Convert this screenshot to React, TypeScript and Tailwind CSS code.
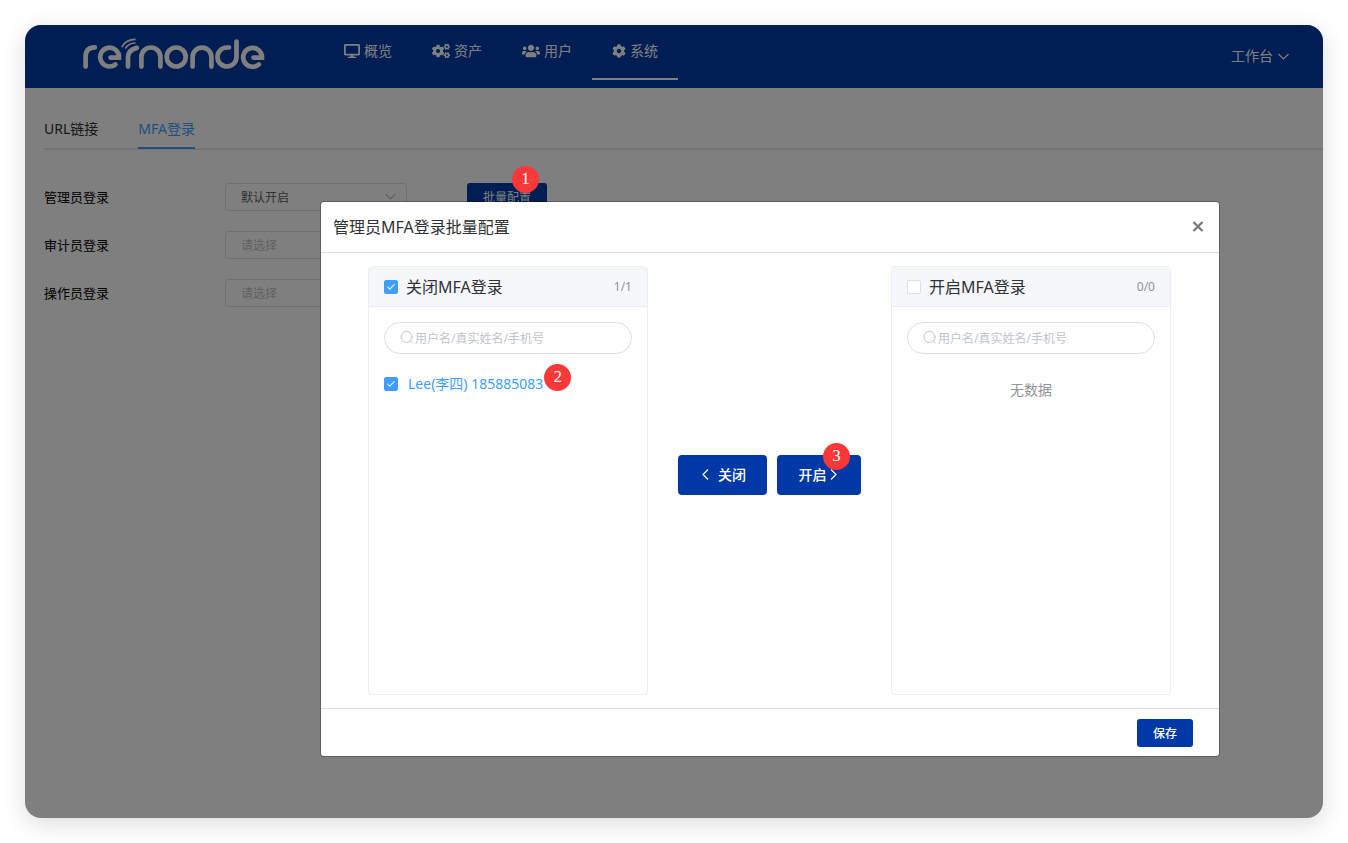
import React, { useState } from 'react';
import { FaCog, FaCogs, FaDesktop, FaUsers } from 'react-icons/fa';
import { Check } from 'lucide-react';

const NAV_ITEMS = [
  { label: '概览', icon: <FaDesktop size={16} />, active: false },
  { label: '资产', icon: <FaCogs size={18} />, active: false },
  { label: '用户', icon: <FaUsers size={18} />, active: false },
  { label: '系统', icon: <FaCog size={14} />, active: true },
];

const LOGIN_ROWS = [
  { id: 'admin', label: '管理员登录', value: 'on' },
  { id: 'auditor', label: '审计员登录', value: '' },
  { id: 'operator', label: '操作员登录', value: '' },
];

const ARROWS = {
  down: 'M1.5 4l5 5 5-5',
  left: 'M9 1.5l-5 5 5 5',
  right: 'M4 1.5l5 5-5 5',
};

const Arrow: React.FC<{ to: keyof typeof ARROWS; className?: string }> = ({ to, className = '' }) => (
  <svg width="13" height="13" viewBox="0 0 13 13" fill="none" stroke="currentColor" strokeWidth="1.2" className={`shrink-0 ${className}`}>
    <path d={ARROWS[to]} />
  </svg>
);

const Logo: React.FC = () => (
  <svg width="184" height="34" viewBox="82 37 184 34" fill="none" stroke="currentColor" strokeWidth="4.7" strokeLinecap="round" role="img" aria-label="remonde">
    <path d="M85.6 66.6V57q0-9.6 9.2-9.6" />
    <path d="M110.5 57.6h8.5A9.4 9.4 0 1 0 115.5 64.4" />
    <path d="M128 66.6V57.5q0-7.5 8.8-9.6" />
    <path d="M141.4 66.6V57a9.5 9.5 0 0 1 19 0v9.6" />
    <circle cx="176.2" cy="57" r="9.5" />
    <path d="M192.6 66.6V57a9.4 9.4 0 0 1 18.8 0v9.6" />
    <path d="M229 47.5h-2.2a9.5 9.5 0 1 0 9.7 9.5V41.6" />
    <path d="M253.5 57.6h8.5A9.4 9.4 0 1 0 258.8 64.4" />
    <path d="M122.2 46.6q3.8-7 12.8-7.2" strokeWidth="1.6" />
    <path d="M125.6 48q3-4.8 9.4-5" strokeWidth="1.6" />
  </svg>
);

const StepBadge: React.FC<{ step: number; className: string }> = ({ step, className }) => (
  <span className={`absolute z-20 w-[27px] h-[27px] rounded-full bg-[#fb3838] text-white text-[17px] font-normal flex items-center justify-center font-['Liberation_Serif',serif] ${className}`}>
    {step}
  </span>
);

interface TickBoxProps {
  id: string;
  checked: boolean;
  onChange: (checked: boolean) => void;
}

const TickBox: React.FC<TickBoxProps> = ({ id, checked, onChange }) => (
  <span className="relative flex w-[14px] h-[14px] shrink-0">
    <input
      id={id}
      type="checkbox"
      className="appearance-none w-full h-full rounded-xs border border-[#dcdfe6] bg-white checked:bg-[#409eff] checked:border-[#409eff]"
      checked={checked}
      onChange={e => onChange(e.target.checked)}
    />
    {checked && <Check size={10} strokeWidth={2.5} className="absolute inset-0 m-auto text-white pointer-events-none" />}
  </span>
);

interface TransferPanelProps {
  id: string;
  title: string;
  count: string;
  checked: boolean;
  onCheck: (checked: boolean) => void;
  children: React.ReactNode;
}

const TransferPanel: React.FC<TransferPanelProps> = ({ id, title, count, checked, onCheck, children }) => (
  <section className="w-[280px] h-[429px] border border-[#ebeef5] rounded overflow-hidden">
    <div className="h-10 px-[15px] flex items-center bg-[#f5f7fa] border-b border-[#ebeef5]">
      <TickBox id={id} checked={checked} onChange={onCheck} />
      <label htmlFor={id} className="ml-2 text-base text-[#303133]">{title}</label>
      <span className="ml-auto text-xs text-[#909399]">{count}</span>
    </div>
    <div className="p-[15px]">
      <label className="h-8 px-[15px] flex items-center border border-[#dcdfe6] rounded-full">
        <svg width="14" height="14" viewBox="0 0 14 14" fill="none" stroke="#c0c4cc" strokeLinecap="round" className="shrink-0">
          <circle cx="6.5" cy="6" r="5.5" />
          <path d="M10.5 10l2 2" />
        </svg>
        <input
          type="text"
          aria-label={`${title}搜索`}
          className="ml-px pt-0.5 w-full min-w-0 text-xs outline-none placeholder:text-[#c0c4cc]"
          placeholder="用户名/真实姓名/手机号"
        />
      </label>
      {children}
    </div>
  </section>
);

export default function App() {
  const [sourceChecked, setSourceChecked] = useState(true);
  const [targetChecked, setTargetChecked] = useState(false);

  return (
    <div className="min-h-screen bg-white p-[25px] flex flex-col font-['Noto_Sans','Noto_Sans_CJK_SC',sans-serif] text-sm">
      <div className="relative grow min-h-[793px] rounded-2xl overflow-hidden bg-white shadow-[0_6px_24px_rgba(0,0,0,0.14)]">
        <header className="h-[63px] pl-[57px] pr-[33px] flex items-start bg-[#003aa8] text-white">
          <div className="pt-3"><Logo /></div>
          <nav className="flex ml-[58px] text-sm">
            {NAV_ITEMS.map(item => (
              <a
                key={item.label}
                href="#"
                className={`h-[55px] pb-0.5 flex items-center gap-1 border-b-2 px-5 ${item.active ? 'border-white' : 'border-transparent'}`}
              >
                {item.icon}
                {item.label}
              </a>
            ))}
          </nav>
          <button className="ml-auto h-[62px] flex items-center gap-1">
            工作台 <Arrow to="down" />
          </button>
        </header>

        <main className="pl-[19px]">
          <nav className="pt-5 flex gap-10 border-b-2 border-[#e4e7ed] text-[#303133]">
            <a href="#" className="h-10 leading-[42px]">URL链接</a>
            <a href="#" className="h-[41px] -mb-0.5 leading-[42px] border-b-2 border-[#409eff] text-[#409eff]">MFA登录</a>
          </nav>
          <div className="pt-[33px] flex flex-col gap-5">
            {LOGIN_ROWS.map(row => (
              <div key={row.id} className="flex items-center h-7">
                <label htmlFor={row.id} className="w-[181px] text-[13px] text-black">{row.label}</label>
                <div className="relative w-[182px]">
                  <select
                    id={row.id}
                    defaultValue={row.value}
                    className={`appearance-none w-full h-7 pt-0.5 pl-[15px] border border-[#dcdfe6] rounded text-xs ${row.value ? 'text-[#606266]' : 'text-[#c0c4cc]'}`}
                  >
                    <option value="">请选择</option>
                    <option value="on">默认开启</option>
                  </select>
                  <Arrow to="down" className="absolute right-[10px] top-[7px] text-[#c0c4cc] pointer-events-none" />
                </div>
                {row.id === 'admin' && (
                  <button className="relative ml-[60px] w-20 h-7 pt-0.5 rounded-[3px] bg-[#003aa8] text-white text-xs">
                    批量配置
                    <StepBadge step={1} className="left-[45px] -top-[17px]" />
                  </button>
                )}
              </div>
            ))}
          </div>
        </main>

        <div className="absolute inset-0 z-10 bg-black/50 flex items-start justify-end pt-[177px] pr-[104px]">
          <div role="dialog" aria-labelledby="dialog-title" className="relative z-30 w-[898px] bg-white rounded-[3px] shadow-[0_0_0_1px_rgba(0,0,0,0.25)]">
            <div className="h-[51px] px-3 flex items-center justify-between border-b border-[#dcdfe6]">
              <h2 id="dialog-title" className="text-base text-[#303133]">管理员MFA登录批量配置</h2>
              <button aria-label="关闭" className="w-[18px] h-[18px] flex items-center justify-center text-[#777]">
                <svg width="12" height="12" viewBox="0 0 12 12" fill="none" stroke="currentColor" strokeWidth="2.2">
                  <path d="M1.5 1l9 9M10.5 1l-9 9" />
                </svg>
              </button>
            </div>

            <div className="py-[13px] pl-[47px] pr-12 flex items-center justify-between">
              <TransferPanel id="source-all" title="关闭MFA登录" count="1/1" checked={sourceChecked} onCheck={setSourceChecked}>
                <div className="mt-[15px] h-[30px] flex items-center text-[#409eff]">
                  <TickBox id="user-lee" checked={sourceChecked} onChange={setSourceChecked} />
                  <span className="relative ml-[10px]">
                    <label htmlFor="user-lee" className="text-sm">Lee(李四) 185885083</label>
                    <StepBadge step={2} className="-right-7 -top-[10px]" />
                  </span>
                </div>
              </TransferPanel>

              <div className="flex gap-[10px] mb-3">
                <button className="w-[89px] h-10 rounded bg-[#0039a6] text-white font-medium flex items-center justify-center gap-1.5">
                  <Arrow to="left" /> 关闭
                </button>
                <button className="relative w-[84px] h-10 rounded bg-[#0039a6] text-white font-medium flex items-center justify-center">
                  开启 <Arrow to="right" />
                  <StepBadge step={3} className="left-[46px] -top-3" />
                </button>
              </div>

              <TransferPanel id="target-all" title="开启MFA登录" count="0/0" checked={targetChecked} onCheck={setTargetChecked}>
                <p className="mt-[21px] h-[30px] leading-[30px] text-center text-[#909399]">无数据</p>
              </TransferPanel>
            </div>

            <div className="h-12 pr-[26px] flex items-center justify-end border-t border-[#dcdfe6]">
              <button className="w-14 h-7 pt-0.5 rounded-[3px] bg-[#0039a6] text-white text-xs font-medium">保存</button>
            </div>
          </div>
        </div>
      </div>
    </div>
  );
}
